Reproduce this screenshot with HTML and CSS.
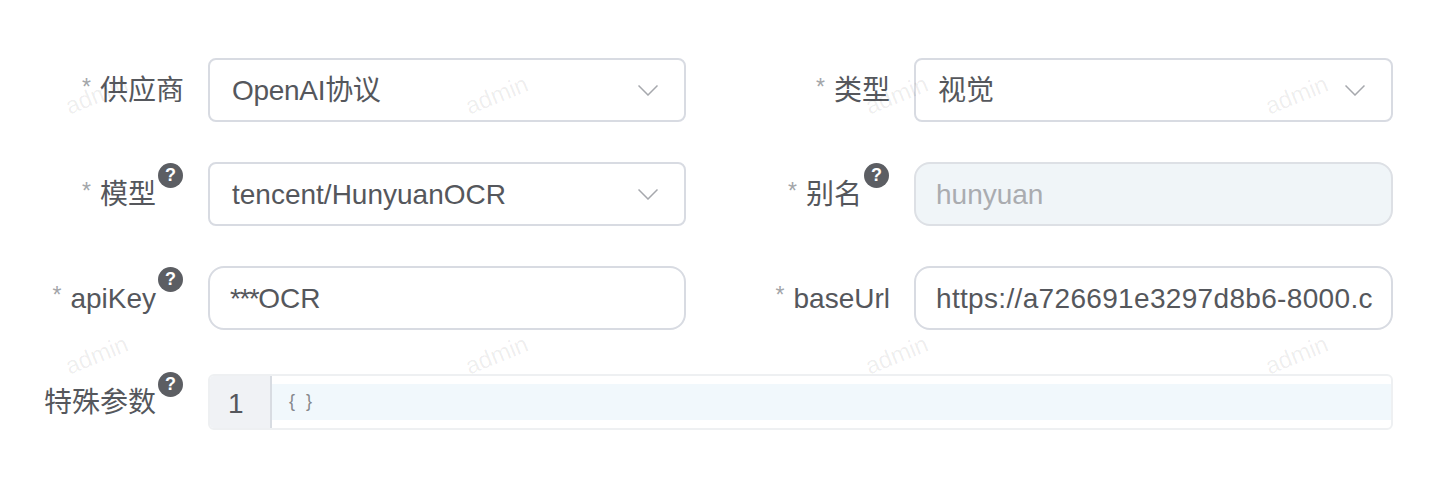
FILE: index.html
```html
<!DOCTYPE html>
<html lang="zh">
<head>
<meta charset="utf-8">
<title>模型配置</title>
<link rel="stylesheet" href="styles.css">
</head>
<body>
<form class="form">
  <div class="label"><span class="req">*</span><span>供应商</span></div>
  <div class="control select"><span class="tight">OpenAI协议</span><svg class="chev" viewBox="0 0 20 11"><path d="M0.5 0.5 10 10 19.5 0.5"/></svg></div>
  <div class="label"><span class="req">*</span><span>类型</span></div>
  <div class="control select"><span>视觉</span><svg class="chev" viewBox="0 0 20 11"><path d="M0.5 0.5 10 10 19.5 0.5"/></svg></div>

  <div class="label"><span class="req">*</span><span>模型</span><i class="help">?</i></div>
  <div class="control select"><span>tencent/HunyuanOCR</span><svg class="chev" viewBox="0 0 20 11"><path d="M0.5 0.5 10 10 19.5 0.5"/></svg></div>
  <div class="label"><span class="req">*</span><span>别名</span><i class="help">?</i></div>
  <div class="control input disabled"><span>hunyuan</span></div>

  <div class="label"><span class="req">*</span><span>apiKey</span><i class="help">?</i></div>
  <div class="control input"><span><span class="stars">***</span>OCR</span></div>
  <div class="label"><span class="req">*</span><span>baseUrl</span></div>
  <div class="control input"><span class="wide">https://a726691e3297d8b6-8000.c</span></div>

  <div class="label label-editor"><span>特殊参数</span><i class="help">?</i></div>
  <div class="editor">
    <div class="gutter">1</div>
    <div class="code"><div class="line">{ }</div></div>
  </div>
</form>
<div class="marks" aria-hidden="true">
  <span class="mark m1">admin</span><span class="mark m2">admin</span><span class="mark m3">admin</span><span class="mark m4">admin</span>
  <span class="mark m5">admin</span><span class="mark m6">admin</span><span class="mark m7">admin</span><span class="mark m8">admin</span>
</div>
</body>
</html>
```

FILE: styles.css
```css
* { box-sizing: border-box; }
html, body { margin: 0; height: 500px; background: #fff; overflow: hidden; }
body {
  position: relative;
  font-family: "Liberation Sans", "Noto Sans CJK SC", sans-serif;
  font-size: 28px;
  color: #55575c;
}
.form {
  display: grid;
  grid-template-columns: 208px 478px 228px 479px;
  grid-template-rows: 64px 64px 64px 56px;
  row-gap: 40px;
  padding-top: 58px;
}
.label {
  display: flex;
  align-items: center;
  justify-content: flex-end;
  padding-right: 24px;
  white-space: nowrap;
  line-height: 32px;
}
.label span { padding-top: 2px; }
.label-editor { margin-top: 4px; margin-bottom: -4px; }
.req {
  color: #a3a5a9;
  font-size: 23px;
  margin-right: 9px;
  position: relative;
  top: -4px;
}
.help {
  width: 25px;
  height: 25px;
  margin-left: 2px;
  margin-bottom: 38px;
  margin-right: 1px;
  flex: none;
  border-radius: 50%;
  background: #5c5e63;
  color: #fff;
  font: 700 18px/25px "Liberation Sans", sans-serif;
  text-align: center;
}
.label-editor .help { margin-bottom: 35px; }
.control {
  display: flex;
  align-items: center;
  justify-content: space-between;
  border: 2px solid #d8dbe2;
  border-radius: 8px;
  background: #fff;
  min-width: 0;
  line-height: 32px;
}
.control > span { padding-top: 2px; }
.select { padding: 0 26px 0 22px; }
.input { padding: 0 16px 0 20px; border-radius: 16px; }
.tight { letter-spacing: -0.3px; }
.wide { letter-spacing: 0.33px; white-space: nowrap; }
.stars { letter-spacing: -1.5px; }
.disabled { background: #f0f5f8; color: #aaacb0; border-color: #dde0e5; }
.chev { width: 20px; height: 11px; flex: none; fill: none; stroke: #a6a8ad; stroke-width: 1.5; }
.editor {
  grid-column: 2 / 5;
  display: flex;
  margin-top: 4px;
  margin-bottom: -4px;
  border: 2px solid #eef0f2;
  border-radius: 6px;
  overflow: hidden;
}
.gutter {
  width: 62px;
  flex: none;
  background: #f0f2f5;
  border-right: 2px solid #d8dce2;
  padding-left: 18px;
  line-height: 56px;
}
.code { flex: 1; padding-top: 8px; }
.line {
  height: 36px;
  background: #f1f8fc;
  padding-left: 17px;
  color: #85878b;
  font: 18px/34px "Liberation Sans", sans-serif;
  letter-spacing: 3px;
}
.marks { pointer-events: none; }
.mark {
  position: absolute;
  color: rgba(0, 0, 0, 0.07);
  font-size: 24px;
  line-height: 30px;
  transform: rotate(-22deg);
}
.m1 { left: 64px; top: 80px; }
.m2 { left: 464px; top: 80px; }
.m3 { left: 864px; top: 80px; }
.m4 { left: 1264px; top: 80px; }
.m5 { left: 64px; top: 340px; }
.m6 { left: 464px; top: 340px; }
.m7 { left: 864px; top: 340px; }
.m8 { left: 1264px; top: 340px; }
```
